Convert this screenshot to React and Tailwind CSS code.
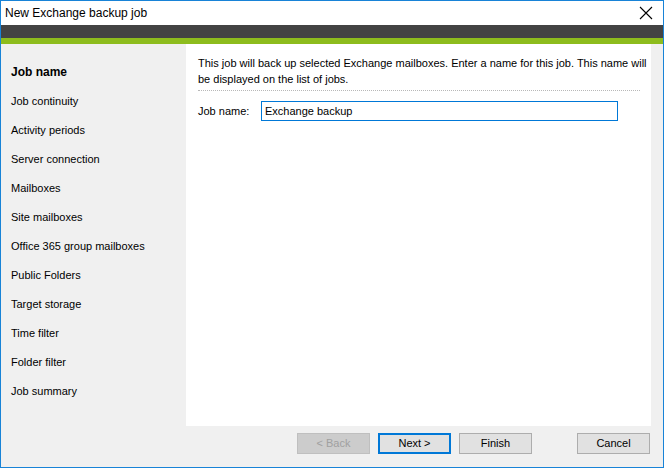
export default function App() {
  const steps = [
    "Job name",
    "Job continuity",
    "Activity periods",
    "Server connection",
    "Mailboxes",
    "Site mailboxes",
    "Office 365 group mailboxes",
    "Public Folders",
    "Target storage",
    "Time filter",
    "Folder filter",
    "Job summary",
  ];

  return (
    <div
      className="w-[664px] h-[468px] border border-[#1883d7] bg-[#f0f0f0] flex flex-col text-[11px] text-black"
      style={{ fontFamily: '"Liberation Sans", Arial, sans-serif' }}
    >
      <div className="h-[24px] bg-white flex items-center justify-between pl-[4px] pr-[10px]">
        <span className="text-[12px]">New Exchange backup job</span>
        <svg width="14" height="14" viewBox="0 0 14 14">
          <path d="M1 1 L13 13 M13 1 L1 13" stroke="#000" strokeWidth="1.1" />
        </svg>
      </div>
      <div className="h-[13px] bg-[#434343]" />
      <div className="h-[6px] bg-[#8dbc1d]" />

      <div className="h-[382px] flex">
        <div className="w-[185px] pt-[21px] pl-[10px] flex flex-col">
          {steps.map((s, i) => (
            <div
              key={s}
              className={`h-[29px] leading-[15px] ${i === 0 ? "font-bold text-[12px]" : ""}`}
            >
              {s}
            </div>
          ))}
        </div>
        <div className="w-[465px] bg-white pt-[11px] pl-[12px] pr-[2px]">
          <p className="leading-[16px] w-[451px]">
            This job will back up selected Exchange mailboxes. Enter a name for this job. This name will be displayed on the list of jobs.
          </p>
          <div className="mt-[3px] border-t border-dotted border-[#b8b8b8] w-[442px]" />
          <div className="mt-[10px] flex items-center">
            <span className="w-[63px]">Job name:</span>
            <div className="w-[357px] h-[20px] border border-[#0078d7] flex items-center px-[3px]">
              Exchange backup
            </div>
          </div>
        </div>
      </div>

      <div className="flex pt-[7px] pl-[296px]">
        <button className="w-[73px] h-[21px] bg-[#cccccc] border border-[#bfbfbf] text-[#a0a0a0]">
          &lt; Back
        </button>
        <button className="ml-[8px] w-[73px] h-[21px] bg-[#e1e1e1] border-2 border-[#0078d7]">
          Next &gt;
        </button>
        <button className="ml-[8px] w-[73px] h-[21px] bg-[#e1e1e1] border border-[#adadad]">
          Finish
        </button>
        <button className="ml-[45px] w-[73px] h-[21px] bg-[#e1e1e1] border border-[#adadad]">
          Cancel
        </button>
      </div>
    </div>
  );
}
